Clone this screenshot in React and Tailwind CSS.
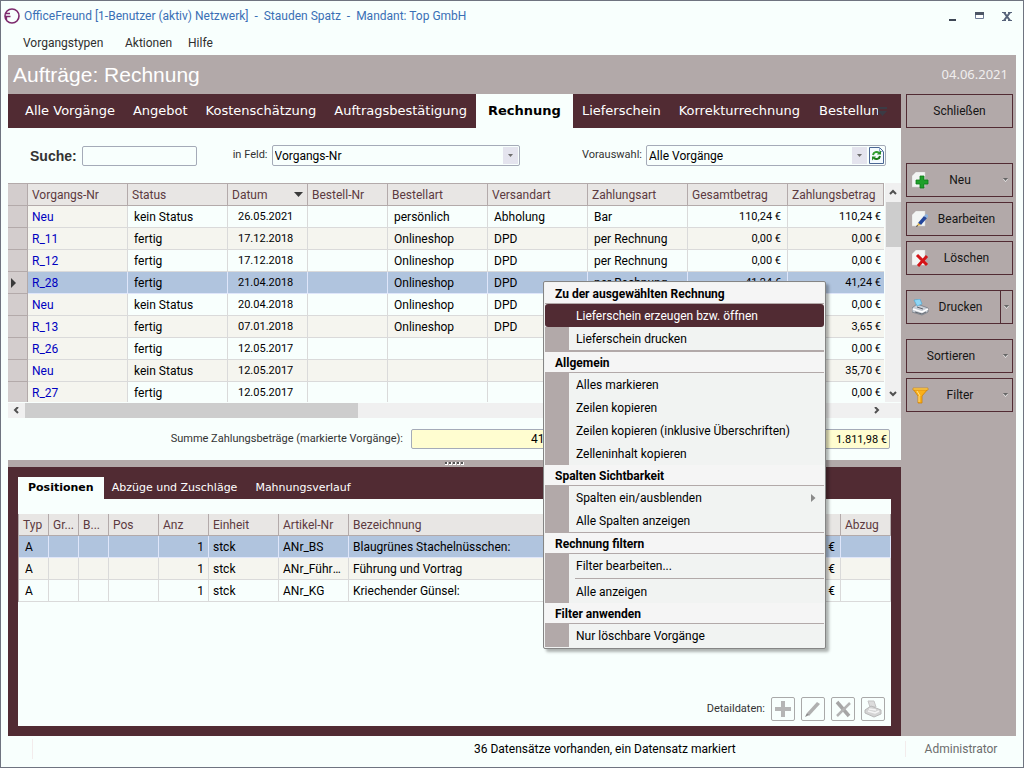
import React, { useState } from "react";
import clsx from "clsx";

const TABS = [
  "Alle Vorgänge",
  "Angebot",
  "Kostenschätzung",
  "Auftragsbestätigung",
  "Rechnung",
  "Lieferschein",
  "Korrekturrechnung",
];

const ORDERS = [
  ["Neu", "kein Status", "26.05.2021", "persönlich", "Abholung", "Bar", "110,24 €", "110,24 €"],
  ["R_11", "fertig", "17.12.2018", "Onlineshop", "DPD", "per Rechnung", "0,00 €", "0,00 €"],
  ["R_12", "fertig", "17.12.2018", "Onlineshop", "DPD", "per Rechnung", "0,00 €", "0,00 €"],
  ["R_28", "fertig", "21.04.2018", "Onlineshop", "DPD", "per Rechnung", "41,24 €", "41,24 €"],
  ["Neu", "kein Status", "20.04.2018", "Onlineshop", "DPD", "", "", "0,00 €"],
  ["R_13", "fertig", "07.01.2018", "Onlineshop", "DPD", "", "", "3,65 €"],
  ["R_26", "fertig", "12.05.2017", "", "", "", "", "0,00 €"],
  ["Neu", "kein Status", "12.05.2017", "", "", "", "", "35,70 €"],
  ["R_27", "fertig", "12.05.2017", "", "", "", "", "0,00 €"],
];

const POSITIONS = [
  ["ANr_BS", "Blaugrünes Stachelnüsschen:"],
  ["ANr_Führung", "Führung und Vortrag"],
  ["ANr_KG", "Kriechender Günsel:"],
];

const App = () => {
  const [selected, setSelected] = useState(3);
  const [position, setPosition] = useState(0);

  return (
    <div className="relative flex min-h-screen flex-col overflow-hidden border border-[#6f7480] bg-[#f8fffd] px-[7px] font-['Roboto',sans-serif] text-xs text-black">
      <TitleBar />
      <MenuBar />
      <header className="flex h-[39px] shrink-0 items-center justify-between bg-[#b2a9a9] px-[5px] text-white">
        <h1 className="font-['Liberation_Sans',sans-serif] text-[21px]">Aufträge: Rechnung</h1>
        <span className="px-[3px] font-['Noto_Sans',sans-serif] text-[13px] text-[#f0eeee]">04.06.2021</span>
      </header>
      <div className="flex flex-1">
        <main className="flex min-w-0 flex-1 flex-col">
          <ProcessTabs />
          <SearchRow />
          <OrderTable selected={selected} onSelect={setSelected} />
          <SumRow />
          <div className="flex h-[7px] items-center justify-center gap-px bg-[#b2a9a9]">
            {[0, 1, 2, 3, 4].map((dot) => (
              <span key={dot} className="h-[3px] w-[3px] border-r border-b border-white bg-[#555]" />
            ))}
          </div>
          <DetailPanel selected={position} onSelect={setPosition} />
        </main>
        <Sidebar />
      </div>
      <footer className="flex h-[31px] shrink-0 items-center pb-[5px]">
        <span className="ml-6 h-5 border-l border-[#f3ecec]" />
        <span className="flex-1 pl-[441px]">36 Datensätze vorhanden, ein Datensatz markiert</span>
        <span className="w-[111px] border-l border-[#f3ecec] text-center text-[#6d6d6d]">Administrator</span>
      </footer>
      <ContextMenu />
    </div>
  );
};

const TitleBar = () => (
  <div className="flex h-[30px] shrink-0 items-center justify-between">
    <div className="-ml-1 flex items-center gap-1 text-[#3a6fb5]">
      <svg width="16" height="16" viewBox="0 0 16 16" fill="none" stroke="#7d2a6d">
        <circle cx="8" cy="8" r="7" strokeWidth="1.6" />
        <path d="M1 8.500h5.500M2 5.500h4M2.500 8v4" strokeWidth="1.3" />
      </svg>
      <span className="whitespace-pre">
        OfficeFreund [1-Benutzer (aktiv) Netzwerk]  -  Stauden Spatz  -  Mandant: Top GmbH
      </span>
    </div>
    <div className="flex items-center gap-[18px] pr-1">
      <button aria-label="Minimieren" className="h-4 w-[9px]">
        <svg width="9" height="12" viewBox="0 0 9 12">
          <path d="M1 9h7v2H1z" fill="#3e4654" />
        </svg>
      </button>
      <button aria-label="Maximieren">
        <svg width="9" height="8" viewBox="0 0 9 8">
          <path d="M.5.5h8v6h-8z" fill="#fff" stroke="#6d7a96" />
          <path d="M0 0h9v3H0z" fill="#4d5666" />
        </svg>
      </button>
      <button aria-label="Schließen">
        <svg width="10" height="9" viewBox="0 0 10 9" fill="none" stroke="#566279">
          <path d="M2 .5l6 8M8 .5l-6 8" strokeWidth="2" />
          <path d="M0 .5h4M6 .5h4M0 8.500h4M6 8.500h4" />
        </svg>
      </button>
    </div>
  </div>
);

const MenuBar = () => (
  <nav className="flex h-6 shrink-0 items-center pl-[15px] text-[#2f2f2f]">
    <button className="w-[102px] text-left">Vorgangstypen</button>
    <button className="w-[63px] text-left">Aktionen</button>
    <button>Hilfe</button>
  </nav>
);

const ProcessTabs = () => (
  <div className="flex h-[34px] shrink-0 overflow-hidden bg-[#512b33] pl-2 font-['DejaVu_Sans',sans-serif] text-[13px] text-white">
    {TABS.map((tab) => (
      <button
        key={tab}
        className={clsx(
          "h-full shrink-0 whitespace-nowrap",
          tab === "Rechnung" ? "bg-[#f8fffd] px-3 font-bold text-black" : "px-[9px]"
        )}
      >
        {tab}
      </button>
    ))}
    <button className="min-w-0 flex-1 overflow-hidden pl-[10px] text-left whitespace-nowrap">Bestellung</button>
    <button aria-label="Weitere Vorgangstypen" className="w-[23px]">
      <svg width="9" height="9" viewBox="0 0 9 9" fill="#3b3b45">
        <path d="M0 0h9v2H0zM0 4h9L4.500 9z" />
      </svg>
    </button>
  </div>
);

const DownButton = () => (
  <span className="pointer-events-none m-px flex w-[15px] items-center justify-center bg-[#e4e4ee]">
    <svg width="5" height="3" viewBox="0 0 5 3">
      <path d="M0 0h5L2.500 3z" fill="#6e6e6e" />
    </svg>
  </span>
);

const SearchRow = () => (
  <div className="flex h-[55px] shrink-0 items-center pr-[15px] pl-[22px]">
    <label htmlFor="suche" className="font-['Liberation_Sans',sans-serif] text-sm font-bold text-[#333]">
      Suche:
    </label>
    <input id="suche" className="ml-[5px] h-5 w-[115px] rounded-[2px] border border-[#a5abb8] bg-transparent px-1" />
    <label htmlFor="feld" className="ml-9 text-[11px] text-[#333]">
      in Feld:
    </label>
    <div className="ml-1 flex h-[21px] w-[248px] rounded-[2px] border border-[#a5abb8]">
      <select id="feld" className="min-w-0 flex-1 appearance-none bg-transparent pl-[2px]">
        <option>Vorgangs-Nr</option>
      </select>
      <DownButton />
    </div>
    <label htmlFor="vorauswahl" className="ml-auto text-[11px] text-[#333]">
      Vorauswahl:
    </label>
    <div className="ml-1 flex h-[21px] w-[240px] rounded-[2px] border border-[#a5abb8]">
      <select id="vorauswahl" className="min-w-0 flex-1 appearance-none bg-transparent pl-[2px]">
        <option>Alle Vorgänge</option>
      </select>
      <DownButton />
      <button aria-label="Aktualisieren" className="mx-px flex items-center">
        <svg width="15" height="17" viewBox="0 0 15 17" fill="none">
          <path d="M.5.5h10l4 4v12H.5z" fill="#f4fbff" stroke="#4b6794" />
          <path d="M10.500 .5v4h4" stroke="#8fa5c8" />
          <path d="M4 8c.5-3 4-4 6-2" stroke="#2f9e2f" strokeWidth="2" />
          <path d="M11 9c-.5 3-4 4-6 2" stroke="#1c7a1c" strokeWidth="2" />
          <path d="M12 3.500v4H8zM3 13.500v-4h4z" fill="#268a26" />
        </svg>
      </button>
    </div>
  </div>
);

const HEAD_CELL = "border-r border-b border-[#b3aaaa] bg-[#e8e6e4] px-1 text-left font-normal text-[#5c3a40]";

const OrderTable = ({ selected, onSelect }) => (
  <div className="shrink-0">
    <div className="flex h-[219px]">
      <div className="min-w-0 flex-1 overflow-hidden border-t border-[#b3aaaa]">
        <table className="w-full table-fixed border-separate border-spacing-0 whitespace-nowrap">
          <colgroup>
            <col className="w-5" />
            <col className="w-[100px]" />
            <col className="w-[100px]" />
            <col className="w-20" />
            <col className="w-20" />
            <col className="w-[100px]" />
            <col className="w-[100px]" />
            <col className="w-[100px]" />
            <col className="w-[100px]" />
            <col />
          </colgroup>
          <thead>
            <tr className="h-[22px]">
              <th aria-label="Markierung" className="border-r border-b border-[#b3aaaa] bg-[#d3cdcd]" />
              <th className={HEAD_CELL}>Vorgangs-Nr</th>
              <th className={HEAD_CELL}>Status</th>
              <th className={HEAD_CELL}>
                <span className="flex items-center justify-between">
                  Datum
                  <svg width="9" height="5" viewBox="0 0 9 5">
                    <path d="M0 0h9L4.500 5z" fill="#3a3a3a" />
                  </svg>
                </span>
              </th>
              <th className={HEAD_CELL}>Bestell-Nr</th>
              <th className={HEAD_CELL}>Bestellart</th>
              <th className={HEAD_CELL}>Versandart</th>
              <th className={HEAD_CELL}>Zahlungsart</th>
              <th className={HEAD_CELL}>Gesamtbetrag</th>
              <th className={HEAD_CELL}>Zahlungsbetrag</th>
            </tr>
          </thead>
          <tbody>
            {ORDERS.map((order, index) => (
              <OrderRow
                key={index}
                order={order}
                odd={index % 2 === 1}
                active={index === selected}
                onClick={() => onSelect(index)}
              />
            ))}
          </tbody>
        </table>
      </div>
      <div className="flex w-[17px] flex-col items-center border-l border-[#f8fffd] bg-[#f0f0f0]">
        <Chevron className="my-[6px]" d="M1 5l3-3 3 3" />
        <div className="h-[45px] w-[15px] bg-[#cdcdcd]" />
        <Chevron className="mt-auto mb-[5px]" d="M1 2l3 3 3-3" />
      </div>
    </div>
    <div className="mt-px flex h-[15px] items-center bg-[#f0f0f0] pr-5 pl-1">
      <Chevron d="M6 0L3 3l3 3" />
      <div className="ml-[5px] h-full w-[333px] bg-[#cdcdcd]" />
      <Chevron className="ml-auto" d="M2 0l3 3-3 3" />
    </div>
  </div>
);

const Chevron = ({ d, className }) => (
  <svg className={clsx("shrink-0", className)} width="8" height="7" viewBox="0 0 8 7">
    <path d={d} fill="none" stroke="#505050" strokeWidth="2" />
  </svg>
);

const OrderRow = ({ order, odd, active, onClick }) => {
  const [nr, status, date, kind, shipping, payment, total, amount] = order;
  const cell = clsx("border-r border-b px-[6px]", active ? "border-[#dfe6fa]" : "border-[#dadada]");
  const figure = clsx(cell, "pt-[2px] text-[11px]");

  return (
    <tr
      className={clsx("h-[22px]", active ? "bg-[#b0c4de]" : odd ? "bg-[#f5f5ef]" : "bg-[#f8fffd]")}
      onClick={onClick}
    >
      <td className="border-r border-b border-[#b3aaaa] bg-[#d3cdcd]">
        {active && (
          <svg className="ml-[3px]" width="5" height="10" viewBox="0 0 5 10">
            <path d="M0 0l5 5-5 5z" fill="#3a3a3a" />
          </svg>
        )}
      </td>
      <td className={clsx(cell, "pl-1! text-[#0000c0]", !active && "bg-[#f5f5ef]")}>{nr}</td>
      <td className={cell}>{status}</td>
      <td className={clsx(figure, "pl-[10px]!")}>{date}</td>
      <td className={cell} />
      <td className={cell}>{kind}</td>
      <td className={cell}>{shipping}</td>
      <td className={cell}>{payment}</td>
      <td className={clsx(figure, "text-right")}>{total}</td>
      <td className={clsx(figure, "border-r-0 pr-[3px]! text-right")}>{amount}</td>
    </tr>
  );
};

const SumRow = () => (
  <div className="flex h-[42px] shrink-0 items-center justify-end pr-[11px]">
    <label htmlFor="summe" className="text-[11px] text-[#333]">
      Summe Zahlungsbeträge (markierte Vorgänge):
    </label>
    <input
      id="summe"
      readOnly
      value="41,24 €"
      className="ml-2 h-5 w-[162px] rounded-[2px] border border-[#a5abb8] bg-[#fffdd0] px-[2px] text-right"
    />
    <input
      aria-label="Summe gesamt"
      readOnly
      value="1.811,98 €"
      className="ml-[155px] h-5 w-[162px] rounded-[2px] border border-[#a5abb8] bg-[#fffdd0] px-[2px] text-right text-[11px]"
    />
  </div>
);

const DetailPanel = ({ selected, onSelect }) => (
  <section className="flex flex-1 flex-col bg-[#512b33] p-[10px]">
    <div className="flex h-[22px] font-['DejaVu_Sans',sans-serif] text-[11px] text-white">
      <button className="bg-[#f8fffd] px-[10px] font-bold text-black">Positionen</button>
      <button className="pr-[10px] pl-2">Abzüge und Zuschläge</button>
      <button className="px-2">Mahnungsverlauf</button>
    </div>
    <div className="flex flex-1 flex-col bg-[#f8fffd] pt-[15px]">
      <table className="w-full table-fixed border-separate border-spacing-0 border-l border-[#b3aaaa] whitespace-nowrap">
        <colgroup>
          <col className="w-[30px]" />
          <col className="w-[30px]" />
          <col className="w-[30px]" />
          <col className="w-[50px]" />
          <col className="w-[50px]" />
          <col className="w-[70px]" />
          <col className="w-[70px]" />
          <col />
          <col className="w-[100px]" />
          <col className="w-[50px]" />
        </colgroup>
        <thead>
          <tr className="h-[22px]">
            <th className={HEAD_CELL}>Typ</th>
            <th className={HEAD_CELL}>Gr...</th>
            <th className={HEAD_CELL}>B...</th>
            <th className={HEAD_CELL}>Pos</th>
            <th className={HEAD_CELL}>Anz</th>
            <th className={HEAD_CELL}>Einheit</th>
            <th className={HEAD_CELL}>Artikel-Nr</th>
            <th className={HEAD_CELL}>Bezeichnung</th>
            <th className={HEAD_CELL} aria-label="Preis" />
            <th className={HEAD_CELL}>Abzug</th>
          </tr>
        </thead>
        <tbody>
          {POSITIONS.map(([article, name], index) => {
            const active = index === selected;
            const cell = clsx("truncate border-r border-b px-1", active ? "border-[#dfe6fa]" : "border-[#dadada]");
            return (
              <tr
                key={article}
                className={clsx("h-[22px]", active ? "bg-[#b0c4de]" : index % 2 ? "bg-[#f5f5ef]" : "bg-[#f8fffd]")}
                onClick={() => onSelect(index)}
              >
                <td className={clsx(cell, "pl-[6px]!")}>A</td>
                <td className={cell} />
                <td className={cell} />
                <td className={cell} />
                <td className={clsx(cell, "text-right")}>1</td>
                <td className={cell}>stck</td>
                <td className={cell}>{article}</td>
                <td className={cell}>{name}</td>
                <td className={clsx(cell, "pr-[5px]! text-right")}>€</td>
                <td className={cell} />
              </tr>
            );
          })}
        </tbody>
      </table>
      <div className="mt-auto flex items-center justify-end gap-[6px] pr-[6px] pb-[5px]">
        <span className="text-[11px] text-[#333]">Detaildaten:</span>
        <div className="flex gap-[6px]">
          <DetailButton label="Hinzufügen">
            <path d="M7 1h4v6h6v4h-6v6H7v-6H1V7h6z" fill="#b5b5b5" />
          </DetailButton>
          <DetailButton label="Bearbeiten">
            <path d="M3 13L13 2l3 2L5 16z" fill="#b0b0b0" />
            <path d="M1 17l2-4 2 2z" fill="#888" />
          </DetailButton>
          <DetailButton label="Löschen">
            <path d="M3 2l12 14" fill="none" stroke="#a5a5a5" strokeWidth="3.500" />
            <path d="M16 3L3 16" fill="none" stroke="#b3b3b3" strokeWidth="2.500" />
          </DetailButton>
          <DetailButton label="Drucken">
            <path d="M4 1h6l2 6H6z" fill="#dcdcdc" stroke="#c4c4c4" />
            <path d="M1 10l6-4 10 4v4l-7 3-9-4z" fill="#d4d4d4" stroke="#b8b8b8" />
            <path d="M4 11l7 2 4-2M5 9l7 1" fill="none" stroke="#f4f4f4" strokeWidth="1.500" />
          </DetailButton>
        </div>
      </div>
    </div>
  </section>
);

const DetailButton = ({ label, children }) => (
  <button
    aria-label={label}
    className="flex h-6 w-6 items-center justify-center rounded-[2px] border border-[#a9a9a9]"
  >
    <svg width="18" height="18" viewBox="0 0 18 18">
      {children}
    </svg>
  </button>
);

const SideButton = ({ label, icon, arrow, split, className }) => (
  <button
    className={clsx("flex h-[34px] w-full items-center border border-[#512b33] text-[#151515]", className)}
  >
    {icon && (
      <svg className="ml-[5px] shrink-0" width="17" height="17" viewBox="0 0 17 17">
        {icon}
      </svg>
    )}
    <span className={clsx("flex-1 text-center", icon ? "pr-2" : arrow && "pr-1")}>{label}</span>
    {arrow && (
      <span
        className={clsx(
          "flex items-center justify-center",
          split ? "h-full w-3 border-l border-[#512b33]" : "w-[13px]"
        )}
      >
        <svg width="5" height="4" viewBox="0 0 5 4">
          <path d="M0 1h5L2.500 4z" fill="#eee" />
          <path d="M0 0h5L2.500 3z" fill="#666" />
        </svg>
      </span>
    )}
  </button>
);

const PAGE = <path d="M4 0h9v15H0V4z" fill="#f3f5f4" stroke="#d2d2d2" strokeWidth=".5" />;

const Sidebar = () => (
  <aside className="w-[115px] shrink-0 bg-[#b2a9a9] pr-[3px] pl-[5px]">
    <SideButton label="Schließen" />
    <SideButton
      className="mt-[35px]"
      label="Neu"
      arrow
      icon={
        <>
          {PAGE}
          <path d="M8 4h4v4h4v4h-4v4H8v-4H4V8h4z" fill="#1fa02a" stroke="#0d7a18" strokeWidth=".8" />
        </>
      }
    />
    <SideButton
      className="mt-[5px]"
      label="Bearbeiten"
      icon={
        <>
          {PAGE}
          <path d="M6 12l6-7 3 2-6 7z" fill="#24479c" />
          <path d="M12 5l2-2 2 1v2l-1 1z" fill="#8cb2e0" />
          <path d="M6 12l3 2-4 1z" fill="#e0b040" />
          <path d="M4 16l1-2 1 1z" fill="#222" />
        </>
      }
    />
    <SideButton
      className="mt-[5px]"
      label="Löschen"
      icon={
        <>
          {PAGE}
          <path d="M5 5l10 10M15 6l-9 10" fill="none" stroke="#d41418" strokeWidth="3" />
        </>
      }
    />
    <SideButton
      className="mt-[15px]"
      label="Drucken"
      arrow
      split
      icon={
        <>
          <path d="M0 9l5-4 11 4v4l-6 3-10-3z" fill="#c9ced6" stroke="#6b727c" strokeWidth=".7" />
          <path d="M2 1l6-1 2 5-5 2z" fill="#8fd6f5" stroke="#4aa5d0" strokeWidth=".6" />
          <path d="M1 10l9 3 6-3" fill="none" stroke="#fff" strokeWidth="1.500" />
          <path d="M3 13l7 2 4-2M5 8l6 2" fill="none" stroke="#60656d" />
        </>
      }
    />
    <SideButton className="mt-[15px]" label="Sortieren" arrow />
    <SideButton
      className="mt-[5px]"
      label="Filter"
      arrow
      icon={
        <>
          <path d="M1 2l5 7v7h4V9l6-7z" fill="#fbb017" stroke="#cf8209" strokeWidth=".8" />
          <path d="M1 1h15v2H1z" fill="#ffd257" stroke="#cf8209" strokeWidth=".6" />
          <path d="M7 9v6M5 4l3 5" stroke="#ffe08a" />
        </>
      }
    />
  </aside>
);

const MenuHeading = ({ children }) => (
  <div className="flex h-[21px] items-center border-b border-[#b2a9a9] bg-[#f5f5f5] pt-[2px] pl-[10px] font-bold">
    {children}
  </div>
);

const MenuItem = ({ children, active, submenu }) => (
  <button
    role="menuitem"
    className={clsx(
      "flex h-[23px] w-full items-center text-left",
      active && "rounded-[3px] bg-[#512b33] text-white"
    )}
  >
    <span className={clsx("h-full w-6 shrink-0", !active && "bg-[#b2a9a9]")} />
    <span className="flex-1 pl-[7px]">{children}</span>
    {submenu && (
      <svg className="mr-2" width="5" height="8" viewBox="0 0 5 8">
        <path d="M0 0l4.500 4L0 8z" fill="#8a8a8a" />
      </svg>
    )}
  </button>
);

const ContextMenu = () => (
  <div
    role="menu"
    className="absolute top-[280px] left-[542px] w-[283px] rounded-[2px] border border-[#858585] bg-[#f1f3f2] p-px shadow-[3px_3px_3px_rgba(0,0,0,0.3)]"
  >
    <MenuHeading>Zu der ausgewählten Rechnung</MenuHeading>
    <MenuItem active>Lieferschein erzeugen bzw. öffnen</MenuItem>
    <MenuItem>Lieferschein drucken</MenuItem>
    <div className="h-[2px] bg-[#b2a9a9]" />
    <MenuHeading>Allgemein</MenuHeading>
    <MenuItem>Alles markieren</MenuItem>
    <MenuItem>Zeilen kopieren</MenuItem>
    <MenuItem>Zeilen kopieren (inklusive Überschriften)</MenuItem>
    <MenuItem>Zelleninhalt kopieren</MenuItem>
    <MenuHeading>Spalten Sichtbarkeit</MenuHeading>
    <MenuItem submenu>Spalten ein/ausblenden</MenuItem>
    <MenuItem>Alle Spalten anzeigen</MenuItem>
    <div className="h-px bg-[#b2a9a9]" />
    <MenuHeading>Rechnung filtern</MenuHeading>
    <MenuItem>Filter bearbeiten...</MenuItem>
    <div className="flex h-[3px] items-center">
      <span className="h-full w-6 bg-[#b2a9a9]" />
      <span className="ml-[6px] h-px flex-1 bg-[#b2a9a9]" />
    </div>
    <MenuItem>Alle anzeigen</MenuItem>
    <MenuHeading>Filter anwenden</MenuHeading>
    <MenuItem>Nur löschbare Vorgänge</MenuItem>
  </div>
);

export default App;
